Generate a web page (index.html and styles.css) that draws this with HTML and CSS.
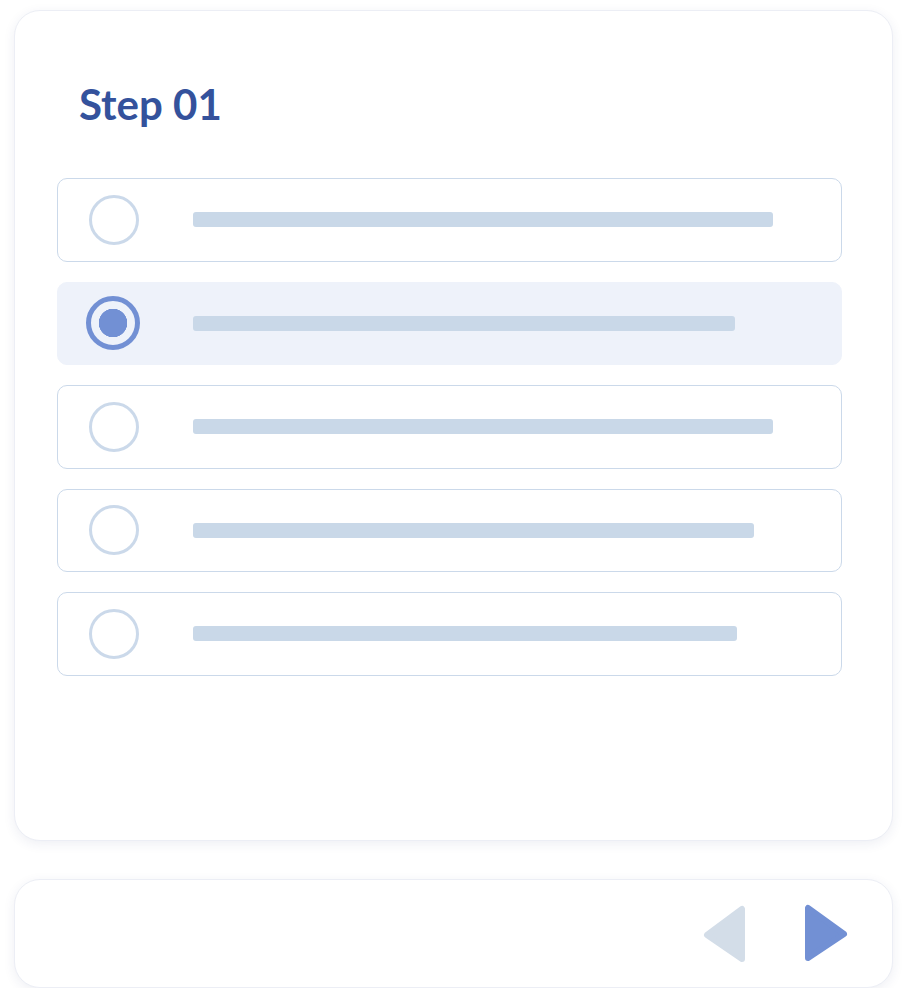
FILE: index.html
```html
<!DOCTYPE html>
<html lang="en">
  <head>
    <meta charset="UTF-8" />
    <meta name="viewport" content="width=device-width, initial-scale=1.0" />
    <title>Step 01</title>
    <link rel="stylesheet" href="styles.css">
  </head>
  <body>
    <div class="card question">
      <h2 class="step-title">Step 01</h2>
      <div class="options">
        <div class="option">
          <span class="radio"></span>
          <span class="line" style="width: 580px"></span>
        </div>
        <div class="option selected">
          <span class="radio"></span>
          <span class="line" style="width: 542px"></span>
        </div>
        <div class="option">
          <span class="radio"></span>
          <span class="line" style="width: 580px"></span>
        </div>
        <div class="option">
          <span class="radio"></span>
          <span class="line" style="width: 561px"></span>
        </div>
        <div class="option">
          <span class="radio"></span>
          <span class="line" style="width: 544px"></span>
        </div>
      </div>
    </div>
    <div class="card nav">
      <button class="arrow prev" aria-label="Previous">
        <svg width="46" height="60" viewBox="0 0 46 60">
          <path d="M40 5 L40 55 L5 31 Z" fill="#d3dde8" stroke="#d3dde8" stroke-width="6" stroke-linejoin="round" />
        </svg>
      </button>
      <button class="arrow next" aria-label="Next">
        <svg width="46" height="60" viewBox="0 0 46 60">
          <path d="M6 4 L6 54 L42 30 Z" fill="#7290d4" stroke="#7290d4" stroke-width="6" stroke-linejoin="round" />
        </svg>
      </button>
    </div>
  </body>
</html>
```

FILE: styles.css
```css
* {
  box-sizing: border-box;
  margin: 0;
  padding: 0;
}

body {
  font-family: Lato, "Open Sans", Arial, sans-serif;
  background-color: #ffffff;
  padding: 10px 15px 0 14px;
}

.card {
  background-color: #ffffff;
  border: 1px solid #eceef5;
  border-radius: 26px;
  box-shadow: 0 3px 12px rgba(40, 50, 110, 0.08);
}

.question {
  height: 831px;
  padding: 71px 50px 0 42px;
}

.step-title {
  color: #34529c;
  font-size: 42px;
  font-weight: 700;
  line-height: 44px;
  margin-left: 22px;
  margin-bottom: 52px;
}

.options {
  display: flex;
  flex-direction: column;
  gap: 20px;
}

.option {
  height: 83.5px;
  border: 1.5px solid #cbd9ea;
  border-radius: 10px;
  display: flex;
  align-items: center;
  padding-left: 31px;
}

.option.selected {
  background-color: #eef2fa;
  border-color: #eef2fa;
  padding-left: 28px;
}

.radio {
  width: 50px;
  height: 50px;
  border: 3.5px solid #cbd9ea;
  border-radius: 50%;
  flex-shrink: 0;
  margin-right: 54px;
}

.selected .radio {
  width: 54px;
  height: 54px;
  border: 5px solid #7290d4;
  margin-right: 53px;
  background: radial-gradient(circle, #7290d4 0 14px, transparent 14.5px);
}

.line {
  height: 15px;
  border-radius: 3px;
  background-color: #c9d8e8;
}

.nav {
  margin-top: 38px;
  height: 109px;
  display: flex;
  justify-content: flex-end;
  align-items: center;
  gap: 54px;
  padding-right: 44px;
}

.arrow {
  background: none;
  border: none;
  cursor: pointer;
  display: flex;
}
```
